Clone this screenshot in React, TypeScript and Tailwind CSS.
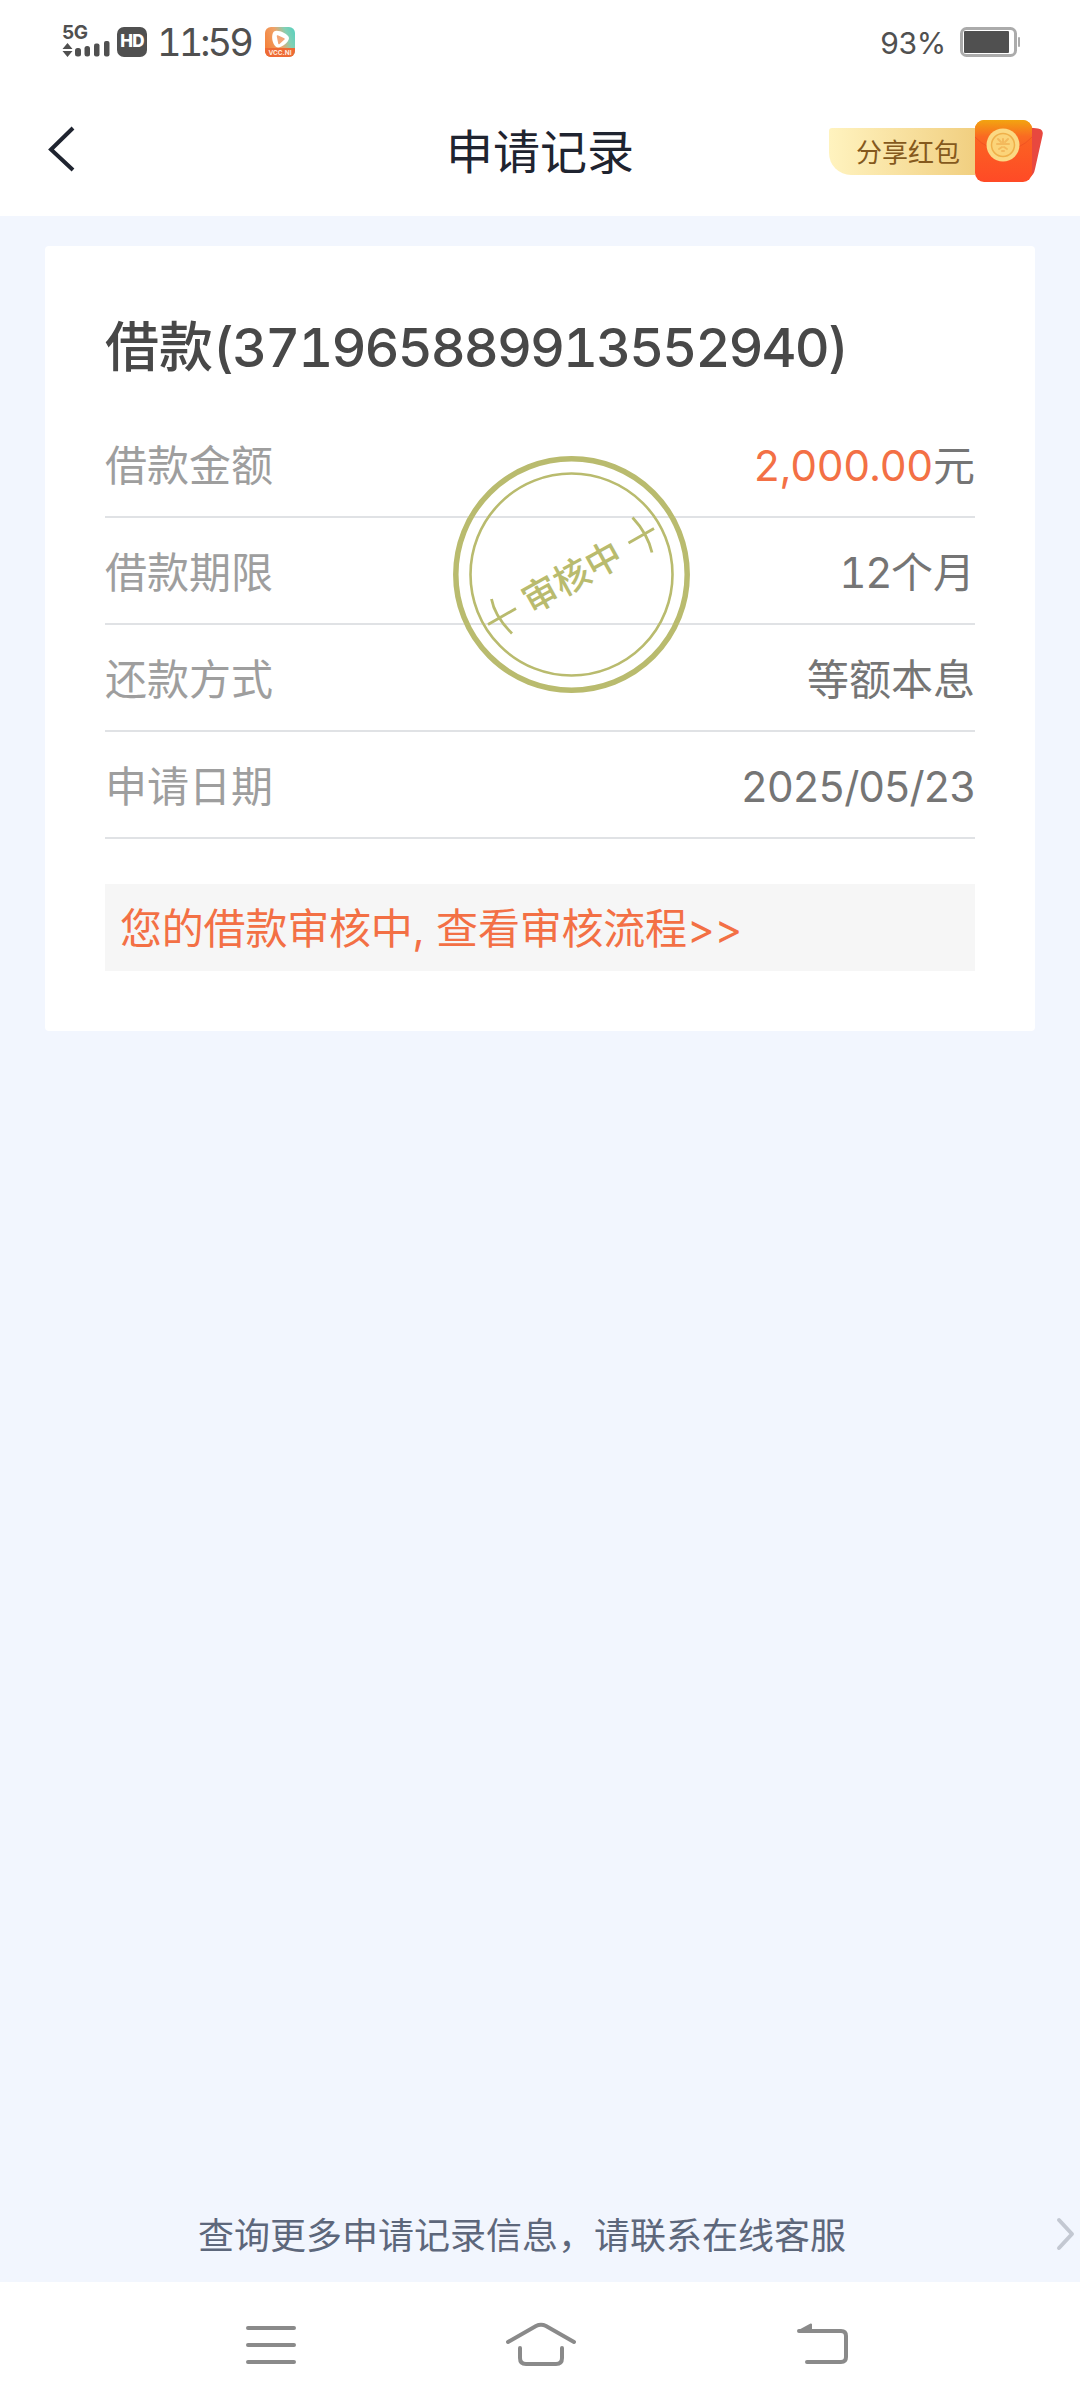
const rows = [
  { label: '借款期限', num: '12', text: '个月' },
  { label: '还款方式', num: '', text: '等额本息' },
  { label: '申请日期', num: '2025/05/23', text: '' },
]

function SignalIcon() {
  return (
    <svg className="w-12 h-8" viewBox="0 0 48 32" fill="#505050" aria-hidden="true">
      <path d="M5.500 17l5 6h-10zM5.500 31l-5-6h10z" />
      <rect x="13" y="22" width="6" height="8.500" rx="2.500" />
      <rect x="22.500" y="20" width="5.500" height="10.500" rx="2.500" />
      <rect x="32" y="17.500" width="5.500" height="13" rx="2" />
      <rect x="42" y="15" width="5.500" height="15.500" rx="2" />
    </svg>
  )
}

function VideoAppIcon() {
  return (
    <svg className="w-[30px] h-[30px]" viewBox="0 0 30 30" aria-hidden="true">
      <defs>
        <linearGradient id="app" x1="0" y1="0.6" x2="1" y2="0.2">
          <stop offset="0" stopColor="#f4823c" />
          <stop offset="0.45" stopColor="#f0a268" />
          <stop offset="0.75" stopColor="#84d0b4" />
          <stop offset="1" stopColor="#5fd0bd" />
        </linearGradient>
      </defs>
      <rect width="30" height="30" rx="6" fill="url(#app)" />
      <path d="M0 21h30v3a6 6 0 01-6 6H6a6 6 0 01-6-6z" fill="#ee6a35" />
      <path d="M9 4.500c3-2.500 14 2 15 6.500 0 4-7 9.500-11 9.500-5 0-8-12-4-16z" fill="#fff" />
      <path d="M12.500 9l6.500 3-5 4.500z" fill="#f3a577" stroke="#f3a577" strokeWidth="1.500" strokeLinejoin="round" />
      <text x="15" y="28" textAnchor="middle" fontSize="6.500" fontWeight="700" fill="#ffe9dc" fontFamily="Inter, sans-serif">VCC.NI</text>
    </svg>
  )
}

function RedPacketIcon() {
  return (
    <svg className="w-[70px] h-[64px]" viewBox="0 0 70 64" aria-hidden="true">
      <defs>
        <linearGradient id="packet" x1="0" y1="0" x2="0" y2="1">
          <stop offset="0" stopColor="#f59a16" />
          <stop offset="0.3" stopColor="#fb6222" />
          <stop offset="1" stopColor="#ff4a26" />
        </linearGradient>
        <linearGradient id="flap" x1="0" y1="0" x2="0" y2="1">
          <stop offset="0" stopColor="#f2a410" />
          <stop offset="0.55" stopColor="#fa6a22" />
          <stop offset="1" stopColor="#fb5a26" />
        </linearGradient>
      </defs>
      <path d="M50 8l13 1.500q6 1 4.500 7L60 50q-1 6-6 9z" fill="#e8483f" />
      <rect y="1" width="57" height="62" rx="9" fill="url(#packet)" />
      <path d="M0 18v-8a9 9 0 019-9h39a9 9 0 019 9v8Q45 31 28.500 31T0 18z" fill="url(#flap)" />
      <path d="M0 18Q12 31 28.500 31T57 18" fill="none" stroke="#e94a20" strokeWidth="1" opacity="0.600" />
      <circle cx="28" cy="26" r="16.500" fill="#fbd983" />
      <circle cx="28" cy="26" r="11.500" fill="#fbd479" stroke="#efb04a" strokeWidth="1.500" />
      <path d="M23 20l3 3M33 20l-3 3M22 25h12M24 30l3-2M32 30l-3-2M28 20v4M27 32h2" stroke="#f3b95c" strokeWidth="2" strokeLinecap="round" />
    </svg>
  )
}

function Stamp() {
  return (
    <svg className="absolute left-[408px] top-[210px] w-[237px] h-[237px]" viewBox="0 0 237 237" fill="none" stroke="#b9bb6e">
      <circle cx="118.500" cy="118.500" r="115.700" strokeWidth="5.500" />
      <circle cx="118.500" cy="118.500" r="101" strokeWidth="2.600" />
      <path d="M38.500 143q3 17 20.500 34.500M35 168.500l28-16" strokeWidth="2.800" />
      <path d="M179.500 61.500q15 16 19.500 35M175.500 87l25.500-14.500" strokeWidth="2.800" />
      <text
        x="119"
        y="134"
        textAnchor="middle"
        transform="rotate(-29 119 121)"
        fontSize="36"
        fontWeight="500"
        fill="#b9bb6e"
        stroke="none"
        fontFamily="'Noto Sans CJK SC', sans-serif"
      >
        审核中
      </text>
    </svg>
  )
}

function StatusBar() {
  return (
    <div className="flex h-[84px] items-center justify-between pl-[62px] pr-[60px] text-[#505050]">
      <div className="flex items-center">
        <div className="relative w-12 h-8">
          <span className="absolute left-0 -top-[3px] text-[19px] leading-5 font-bold tracking-tight">5G</span>
          <SignalIcon />
        </div>
        <div className="ml-[7px] flex h-[30px] w-[30px] items-center justify-center rounded-[7px] bg-[#505050] text-[17px] font-extrabold tracking-tighter text-white">HD</div>
        <span className="ml-[10px] w-[93px] text-[38px] leading-none tabular-nums tracking-[-3px]">11:59</span>
        <div className="ml-[15px]"><VideoAppIcon /></div>
      </div>
      <div className="flex items-center">
        <span className="pt-[2px] text-[30px] leading-none tracking-[-0.3px]">93%</span>
        <svg className="ml-[14px] w-[60px] h-[30px]" viewBox="0 0 60 30" aria-hidden="true">
          <rect x="1.500" y="1.500" width="54" height="27" rx="5" fill="#fff" stroke="#ababab" strokeWidth="3" />
          <rect x="4" y="4" width="45" height="22" rx="1" fill="#505050" />
          <rect x="58" y="10" width="2" height="10" rx="1" fill="#ababab" />
        </svg>
      </div>
    </div>
  )
}

function Header() {
  return (
    <div className="grid h-[132px] grid-cols-3 items-center">
      <svg className="ml-[46px] -mt-[2px] w-[30px] h-[48px]" viewBox="0 0 30 48" fill="none" stroke="#1f2430" strokeWidth="4" aria-hidden="true">
        <path d="M27 3L5 24.500 27 45" />
      </svg>
      <h1 className="pt-[3px] text-center text-[47px] leading-none text-[#1f2430]">申请记录</h1>
      <div className="flex items-center justify-end pr-[35px] pt-[2px]">
        <div className="flex h-[47px] w-[146px] items-center rounded-bl-[22px] rounded-tl-[3px] bg-gradient-to-r from-[#fff3bf] to-[#f1cf80] pl-[27px] pt-[4px] text-[26px] leading-none text-[#85591d]">分享红包</div>
        <RedPacketIcon />
      </div>
    </div>
  )
}

function RecordCard() {
  return (
    <section className="relative mx-[45px] mt-[30px] h-[785px] rounded-[4px] bg-white px-[60px] pt-[62px]">
      <h2 className="whitespace-nowrap text-[54px] leading-[80px] font-medium text-[#484848]">
        借款<span className="tabular-nums tracking-[-1.9px]">(371965889913552940)</span>
      </h2>
      <div className="mt-[22px] text-[42px] text-[#757575]">
        <div className="flex h-[108px] items-center justify-between border-b-2 border-[#e0e2e5] pt-[4px]">
          <span className="text-[#9e9e9e]">借款金额</span>
          <span><span className="text-[#f37045]">2,000.00</span>元</span>
        </div>
        {rows.map((row) => (
          <div key={row.label} className="flex h-[107px] items-center justify-between border-b-2 border-[#e0e2e5] pt-[4px]">
            <span className="text-[#9e9e9e]">{row.label}</span>
            <span><span className="tabular-nums tracking-[-1.4px]">{row.num}</span>{row.text}</span>
          </div>
        ))}
      </div>
      <div className="mt-[45px] flex h-[87px] items-center bg-[#f6f6f6] pl-[15px] pt-[2px] text-[42px] tracking-[-0.2px] text-[#f37045]">
        您的借款审核中, 查看审核流程&gt;&gt;
      </div>
      <Stamp />
    </section>
  )
}

function NavBar() {
  return (
    <div className="flex h-[126px] items-center bg-white pl-[244px]">
      <svg className="w-[54px] h-[48px]" viewBox="0 0 54 48" fill="none" stroke="#8a8a8a" strokeWidth="4" strokeLinecap="round">
        <path d="M4 7h46M4 24h46M4 41h46" />
      </svg>
      <svg className="ml-[206px] w-[74px] h-[48px]" viewBox="0 0 74 48" fill="none" stroke="#8a8a8a" strokeWidth="4" strokeLinecap="round">
        <path d="M4 21L32 5q5-2.500 10 0l28 16" />
        <path d="M16 27v10q0 6 6 6h30q6 0 6-6V27" />
      </svg>
      <svg className="ml-[217px] w-[54px] h-[48px]" viewBox="0 0 54 48" fill="none" stroke="#8a8a8a" strokeWidth="4" strokeLinecap="round" strokeLinejoin="round">
        <path d="M4 10h42q5 0 5 5v21q0 5-5 5H12" />
        <path d="M4 10L16 3.500V10z" fill="#8a8a8a" strokeWidth="2" />
      </svg>
    </div>
  )
}

export default function App() {
  return (
    <div className="flex h-[2408px] w-[1080px] flex-col overflow-hidden bg-[#f2f6fe] font-['Inter','Noto_Sans_CJK_SC',sans-serif]">
      <div className="bg-white">
        <StatusBar />
        <Header />
      </div>
      <RecordCard />
      <div className="mt-auto flex h-[96px] items-center justify-between pl-[198px] pr-[3px] text-[36px] text-[#5d677b]">
        <span className="pt-[3px]">查询更多申请记录信息，请联系在线客服</span>
        <svg className="w-[22px] h-[34px]" viewBox="0 0 22 34" fill="none" stroke="#c3c8d2" strokeWidth="4" strokeLinecap="round" strokeLinejoin="round">
          <path d="M4 3l13 14L4 31" />
        </svg>
      </div>
      <NavBar />
    </div>
  )
}
